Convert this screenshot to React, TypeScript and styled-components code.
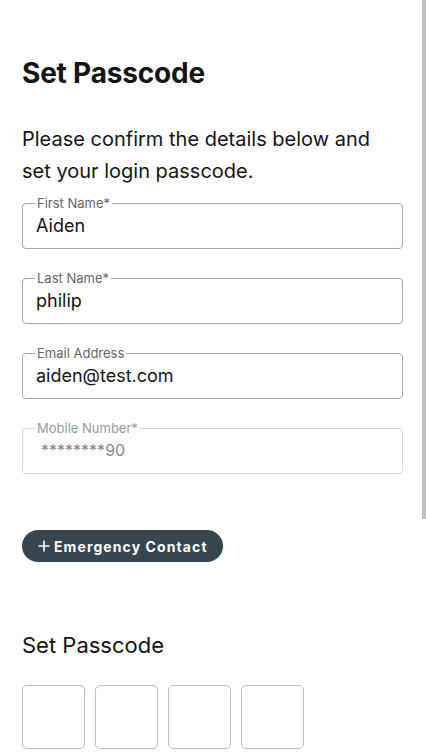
import React from 'react';
import styled, { createGlobalStyle } from 'styled-components';

const GlobalStyle = createGlobalStyle`
  html, body {
    margin: 0;
    padding: 0;
    background: #ffffff;
  }
  * {
    box-sizing: border-box;
  }
`;

const Page = styled.div`
  min-height: 100vh;
  background: #ffffff;
  font-family: Inter, "Noto Sans", sans-serif;
  color: #151515;
`;

// page scrollbar thumb, drawn over the right edge
const ScrollThumb = styled.div`
  position: fixed;
  top: 0;
  right: 0;
  width: 4px;
  height: 519px;
  background: #c1c1c1;
`;

const Content = styled.div`
  display: flex;
  flex-direction: column;
  padding: 55px 23px 40px 22px;
`;

const Title = styled.h1`
  margin: 0;
  font-size: 28px;
  line-height: 36px;
  font-weight: 700;
  letter-spacing: -0.2px;
`;

const Intro = styled.p`
  margin: 32px 0 0;
  max-width: 356px;
  font-size: 20px;
  line-height: 32px;
  font-weight: 400;
`;

const Fields = styled.div`
  display: flex;
  flex-direction: column;
  gap: 22px;
  margin-top: 9px;
`;

const Box = styled.fieldset<{ disabled?: boolean }>`
  margin: 0;
  padding: 0 12px;
  height: 53px;
  border: 1px solid ${p => (p.disabled ? '#d6d6d6' : '#a9a9a9')};
  border-radius: 4px;
  display: flex;
  align-items: flex-start;
`;

const Legend = styled.legend<{ disabled?: boolean }>`
  padding: 0 2px;
  font-size: 13px;
  line-height: 14px;
  color: ${p => (p.disabled ? '#9a9a9a' : '#666666')};
`;

const Value = styled.input<{ muted?: boolean }>`
  border: none;
  outline: none;
  background: transparent;
  width: 100%;
  height: 30px;
  padding: 0 ${p => (p.muted ? '6px' : '1px')};
  font-family: inherit;
  font-size: ${p => (p.muted ? '16px' : '18px')};
  color: ${p => (p.muted ? '#8a8a8a' : '#151515')};
`;

const AddButton = styled.button`
  align-self: flex-start;
  margin-top: 56px;
  height: 32px;
  padding: 0 15px 0 16px;
  border: none;
  border-radius: 16px;
  background: #37464f;
  color: #ffffff;
  font-family: inherit;
  font-size: 14px;
  font-weight: 700;
  letter-spacing: 1.1px;
  display: flex;
  align-items: center;
  gap: 4px;
`;

const Subtitle = styled.h2`
  margin: 68px 0 0;
  font-size: 22px;
  line-height: 30px;
  font-weight: 400;
`;

const CodeRow = styled.div`
  display: flex;
  gap: 10px;
  margin-top: 25px;
`;

const CodeBox = styled.input`
  width: 63px;
  height: 64px;
  border: 1px solid #bdbdbd;
  border-radius: 5px;
  outline: none;
  text-align: center;
  font-family: inherit;
  font-size: 22px;
`;

type FieldProps = {
  label: string;
  value: string;
  disabled?: boolean;
};

const Field: React.FC<FieldProps> = ({ label, value, disabled }) => (
  <Box disabled={disabled}>
    <Legend disabled={disabled}>{label}</Legend>
    <Value muted={disabled} defaultValue={value} readOnly={disabled} />
  </Box>
);

const PlusIcon = () => (
  <svg width="12" height="12" viewBox="0 0 12 12" fill="none" stroke="#fff" strokeWidth="1.6">
    <path d="M6 0.5v11M0.5 6h11" />
  </svg>
);

export default function App() {
  return (
    <Page>
      <GlobalStyle />
      <Content>
        <Title>Set Passcode</Title>
        <Intro>Please confirm the details below and set your login passcode.</Intro>
        <Fields>
          <Field label="First Name*" value="Aiden" />
          <Field label="Last Name*" value="philip" />
          <Field label="Email Address" value="aiden@test.com" />
          <Field label="Mobile Number*" value="********90" disabled />
        </Fields>
        <AddButton>
          <PlusIcon />
          Emergency Contact
        </AddButton>
        <Subtitle>Set Passcode</Subtitle>
        <CodeRow>
          {[0, 1, 2, 3].map(i => (
            <CodeBox key={i} maxLength={1} inputMode="numeric" />
          ))}
        </CodeRow>
      </Content>
      <ScrollThumb />
    </Page>
  );
}
